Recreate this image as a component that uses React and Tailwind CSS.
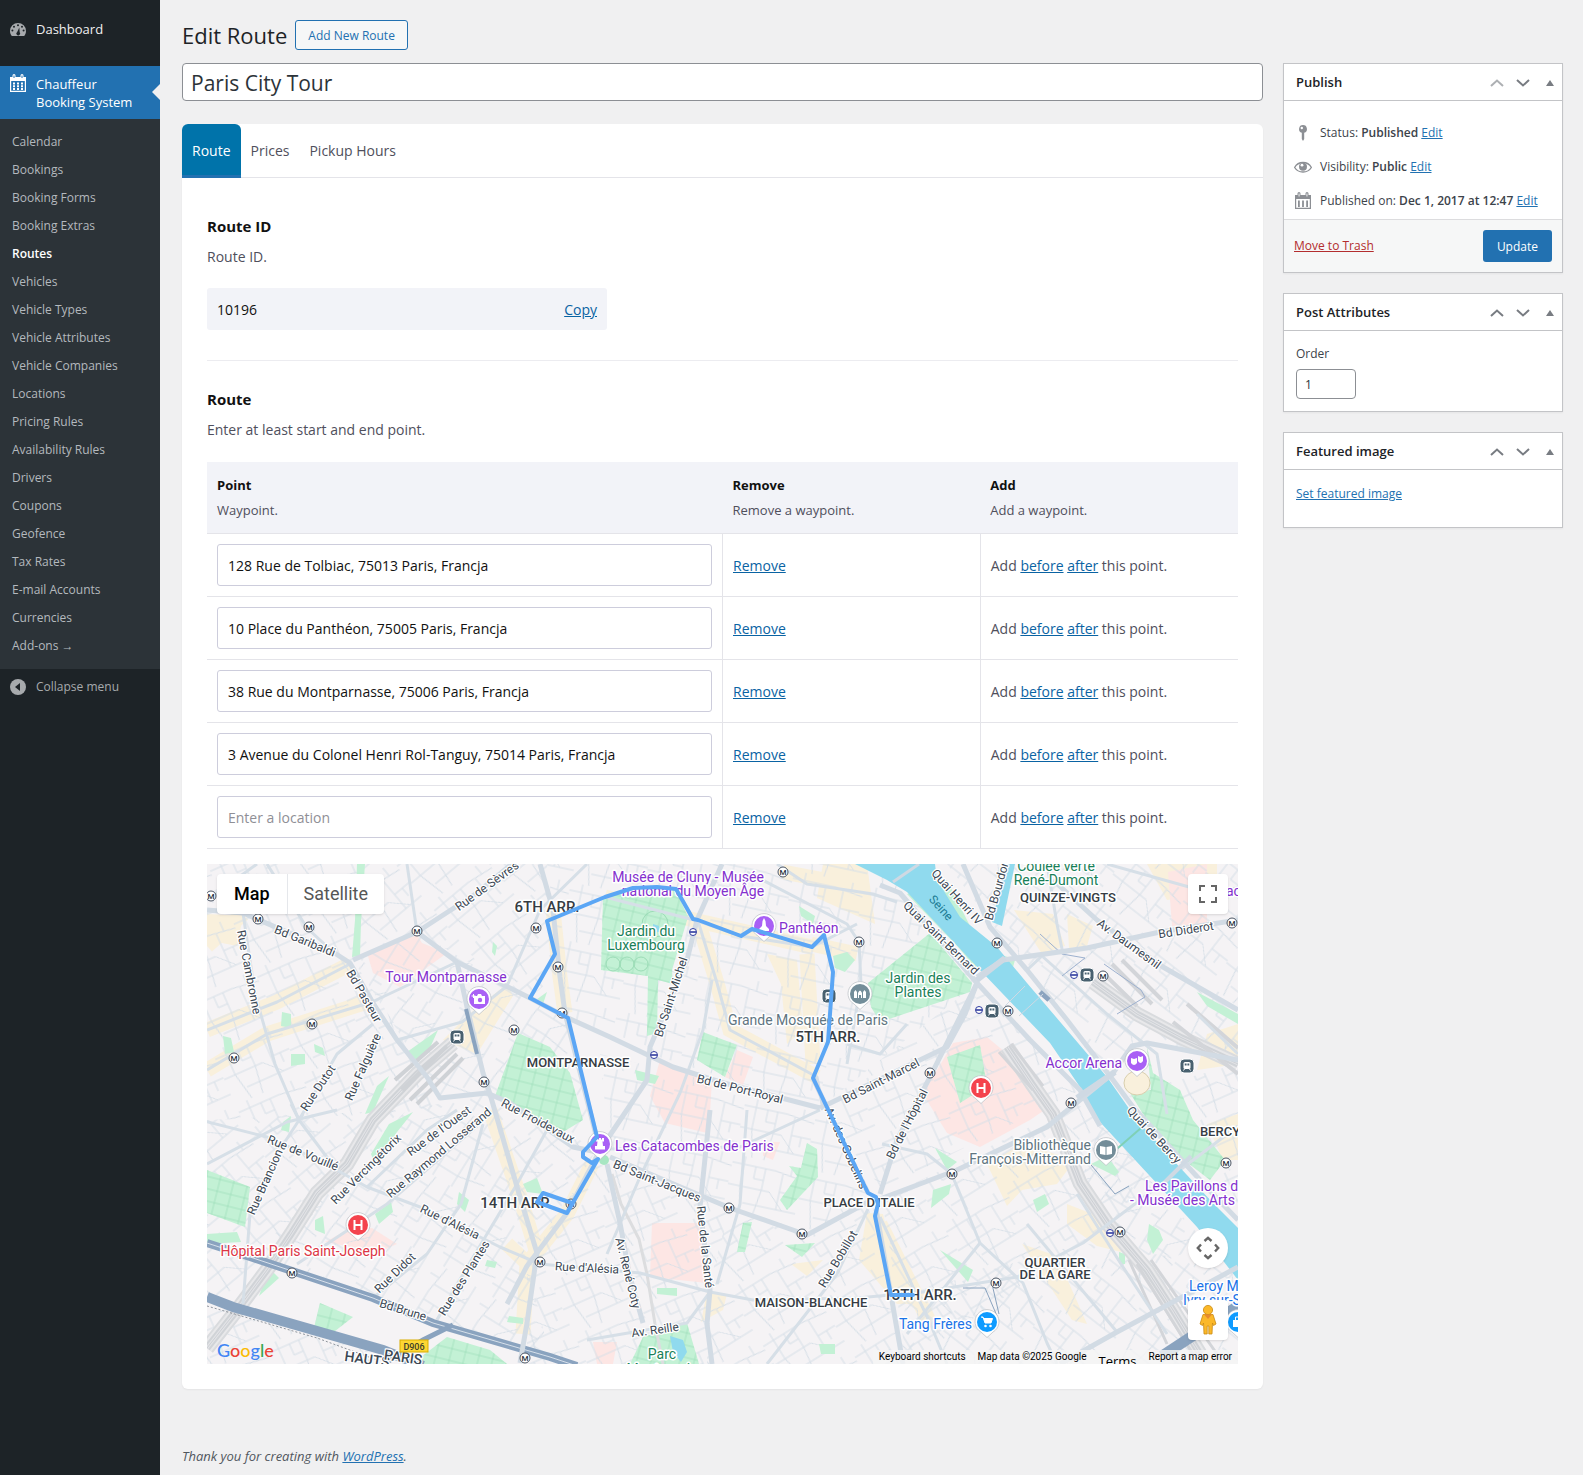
import { useState } from 'react';

const menuItems = [
  'Calendar',
  'Bookings',
  'Booking Forms',
  'Booking Extras',
  'Routes',
  'Vehicles',
  'Vehicle Types',
  'Vehicle Attributes',
  'Vehicle Companies',
  'Locations',
  'Pricing Rules',
  'Availability Rules',
  'Drivers',
  'Coupons',
  'Geofence',
  'Tax Rates',
  'E-mail Accounts',
  'Currencies',
  'Add-ons →'
];

const initialPoints = [
  '128 Rue de Tolbiac, 75013 Paris, Francja',
  '10 Place du Panthéon, 75005 Paris, Francja',
  '38 Rue du Montparnasse, 75006 Paris, Francja',
  '3 Avenue du Colonel Henri Rol-Tanguy, 75014 Paris, Francja',
  ''
];

const tabs = ['Route', 'Prices', 'Pickup Hours'];

const link = 'text-[#2271b1] underline';

/* ---------- Map data ---------- */

const districts = [
  { d: 'M0 0H150L146 96L240 240L190 250L0 256Z', fill: 'url(#streets-a)' },
  { d: 'M150 0H340L350 110L323 134L210 68L146 96Z', fill: 'url(#streets-b)' },
  { d: 'M146 96L210 68L323 134L361 154L390 280L280 229L233 234Z', fill: 'url(#streets-c)' },
  { d: 'M340 0H515L443 183L361 154Z', fill: 'url(#streets-d)' },
  { d: 'M515 0H700L770 119L613 244L443 190Z', fill: 'url(#streets-d)' },
  { d: 'M0 256L193 246L60 406L0 440Z', fill: 'url(#streets-b)' },
  { d: 'M200 246L283 230L320 399L343 493L43 393Z', fill: 'url(#streets-c)' },
  { d: 'M283 230L390 285L320 399Z', fill: 'url(#streets-b)' },
  { d: 'M0 440L180 490V500H0Z', fill: 'url(#streets-a)' },
  { d: 'M393 190L613 244L670 338L600 371L403 293Z', fill: 'url(#streets-d)' },
  { d: 'M385 298L523 344L503 428V500H320V400Z', fill: 'url(#streets-a)' },
  { d: 'M523 344L600 371L661 340L700 500H500V428Z', fill: 'url(#streets-e)' },
  { d: 'M613 244L770 119L873 226L675 325Z', fill: 'url(#streets-a)' },
  { d: 'M675 335L870 240L973 306L876 379L700 500Z', fill: 'url(#streets-e)' },
  { d: 'M700 430L876 379L1031 403V500H690Z', fill: 'url(#streets-f)' },
  { d: 'M740 0H1031V200L940 180L900 213Z', fill: 'url(#streets-f)' },
  { d: 'M920 230L1031 200V340Z', fill: 'url(#streets-a)' },
  { d: 'M893 260L1000 380L950 400L870 330Z', fill: 'url(#streets-c)' }
];

const commercialAreas = [
  'M807 46L846 50L858 82L835 90Z',
  'M860 50L886 62L880 82L862 84Z',
  'M780 300L815 280L868 296L850 320L815 326L800 342Z',
  'M660 349L676 350L688 400L720 440L690 440L652 396Z',
  'M860 340L906 358L914 388L890 382L860 360Z',
  'M815 380L850 392L880 460L865 456Z',
  'M0 50L36 52L30 82L0 76Z',
  'M236 176L262 150L300 120L306 132L270 190Z',
  'M560 90L590 96L596 166L580 180L574 120Z',
  'M616 0H660L668 60L610 34Z',
  'M940 0H1010V28L960 36Z',
  'M1000 170L1031 160V200L990 206Z',
  'M1000 260L1031 250V296L1016 296Z',
  'M500 428L520 430L516 446L494 458Z',
  'M584 400L616 396L600 412Z'
];

const parks = [
  'M394 106L396 33L426 24L468 24L481 53L465 106L466 120L451 116L450 169L440 172L441 112Z',
  'M723 69L765 119L763 128L673 158L664 143L661 119Z',
  'M496 168L530 181L518 213L490 196Z',
  'M311 169L343 183L363 209L376 256L356 268L288 232Z',
  'M740 193L773 181L780 222L753 239Z',
  'M0 306L43 323L38 363L0 349Z',
  'M113 439L146 453L123 471L106 468Z',
  'M240 473L283 486L300 500H205Z',
  'M436 473L480 459L492 500H423Z',
  'M600 279L610 285L611 313L580 346L573 336L590 312L582 302L594 304Z',
  'M536 359L545 358L538 388L530 388Z',
  'M578 381L608 379L595 393Z',
  'M940 183L946 209L973 226L986 256L1018 296L1003 316L973 293L936 250L923 229L944 226Z',
  'M733 386L766 406L761 418Z',
  'M150 0H158L154 58L153 92L145 93L148 56Z',
  'M75 148L84 150L84 164L74 162Z',
  'M107 180L116 184L118 192L108 188Z',
  'M16 172L24 174L27 188L18 190Z',
  'M84 190L98 190L98 200L84 202Z',
  'M200 188L231 166L222 186L206 198Z',
  'M170 222L182 212L166 248L158 250Z',
  'M182 260L206 248L190 268L168 300L164 290Z',
  'M62 404L72 414L52 432Z',
  'M108 356L116 352L118 370L108 366Z',
  'M168 350L184 338L186 348L172 360Z',
  'M286 78L290 82L288 92L285 88Z',
  'M326 138L340 128L336 140Z',
  'M626 92L640 88L648 96L638 108L628 104Z',
  'M592 42L608 52L606 60L594 52Z',
  'M428 206L452 212L448 220L430 216Z',
  'M740 16L764 64L770 106L752 84L700 30Z',
  'M990 128L1031 150L1031 160L1000 142Z',
  'M798 92L808 96L806 103L800 100Z',
  'M942 360L952 366L956 376L946 390L940 376Z',
  'M826 336L838 330L842 340L830 348Z',
  'M912 388L918 390L918 400L912 400Z',
  'M726 326L744 320L742 330L724 344Z',
  'M728 284L750 298L740 306Z',
  'M76 258L84 252L82 268L74 266Z',
  'M316 320L330 314L336 330L320 328Z',
  'M252 328L262 336L258 348L250 340Z',
  'M280 396L290 398L288 404L278 402Z',
  'M450 424L470 424L470 432L450 430Z',
  'M612 480H628V490H614Z',
  'M884 300L900 292L912 308L908 312Z',
  'M302 452L316 454L316 460L300 458Z',
  'M0 370L30 368L34 378L0 380Z'
];

const hospitals = [
  'M160 89L210 71L215 79L240 89L193 123L166 109Z',
  'M530 186L546 193L536 221L518 213Z',
  'M453 196L505 216L503 249L500 269L458 259L443 232Z',
  'M746 179L780 173L823 209L842 243L823 256L773 283L740 269L716 230Z',
  'M445 359L493 359L500 419L443 413Z',
  'M118 378L140 366L165 364L190 380L172 388Z',
  'M961 8L1000 0L1000 60L965 62Z',
  'M386 478L410 478L406 500H390Z',
  'M556 278L573 278L566 296L556 292Z'
];

const water = [
  'M648 0H728L730 16L753 53L790 83L820 119L900 213L930 256L966 296L1006 339L1031 364V416L990 363L893 258L873 223L843 179L773 106L700 28L680 16Z',
  'M799 0H808L795 62L785 58Z',
  'M463 472L476 476L480 488L474 498L466 488Z',
  'M446 60L452 62L452 68L446 68Z'
];

const shoppingStreets = [
  'M0 166L70 138L143 100',
  'M0 82L36 50',
  'M0 206L60 170L160 138',
  'M346 46L353 113L358 149',
  'M491 57L510 119L523 166L610 213',
  'M398 33L491 57L605 83',
  'M600 90L606 200',
  'M283 246L313 333L330 389',
  'M385 300L360 350L320 400',
  'M604 80L650 90',
  'M300 380L320 399L316 470',
  'M673 360L723 459',
  'M576 8L660 24'
];

const majorRoads = [
  'M0 46L36 49L126 88L143 99L166 139L190 176L220 213L233 234L280 229L303 239L366 283L390 288',
  'M146 96L210 68L270 29L306 -1',
  'M210 68L250 98L293 119L323 134L361 154L403 173L466 203L513 218L613 244',
  'M333 0L346 46L353 113L358 149L390 275',
  'M515 0L490 56L480 96L443 183L440 216L393 286',
  'M250 98L260 143L276 209L283 230L313 333L330 389L320 459L313 499',
  'M613 244L740 183L758 150L770 119',
  'M770 119L723 213L690 276L673 330',
  'M665 338L750 306L840 263L906 209L925 182L940 179L1031 196',
  'M661 338L600 371L523 344L403 293',
  'M400 300L413 359L423 413L436 459',
  'M503 246L493 343L503 426L500 460L505 500',
  'M391 290L360 349L320 402L300 440',
  'M756 0L783 63L820 106L860 156L906 216L926 243L1006 330L1031 356',
  'M673 21L693 29L770 119L823 176L873 226L893 262',
  'M770 113L796 96L880 84L953 68L1031 56',
  'M846 16L890 56L956 103L1031 146',
  'M853 500L910 468L1031 403',
  'M606 214L621 246L661 329',
  'M669 345L696 500'
];

const secondaryRoads = [
  'M0 166L70 138L143 100',
  'M36 49L48 130L68 200L92 256',
  'M0 206L60 170L165 138L250 98',
  'M92 256L130 190L166 160',
  'M190 176L255 158L300 122L333 46L380 0',
  'M491 57L510 119L523 166L610 213L616 246',
  'M505 116L496 166L473 229L433 313L400 390',
  'M398 33L491 57L534 72L605 83L650 60',
  'M570 0L600 20L666 30L690 38',
  'M540 8L640 60L652 78L654 120L640 200',
  'M613 246L533 283L403 285',
  'M-7 256L60 273L112 296L160 323L213 343L293 383L333 400L433 409L503 428L546 436L650 434L716 428L810 413L876 379L973 306L1031 262',
  'M0 300L80 258L130 246',
  'M84 240L92 256L125 300',
  'M36 440L43 350L70 290L96 250',
  'M166 434L220 390L254 340L276 260',
  'M230 456L262 400L310 320L340 266',
  'M90 400L180 340L270 262',
  'M160 323L220 266L250 246',
  'M503 428L480 459L380 476',
  'M661 345L630 410L560 500',
  'M540 246L533 340L510 420',
  'M673 353L723 459L740 500',
  'M743 306L773 379L816 419L840 479L850 500',
  'M773 379L700 470',
  'M745 310L720 290L675 280',
  'M820 106L835 92L900 150L950 190L960 250',
  'M840 0L850 60L856 90',
  'M900 0L1000 28L1031 24',
  'M870 330L914 400L960 470',
  'M820 360L910 468',
  'M990 150L1031 190',
  'M700 160L673 190L640 180',
  'M0 36L50 0',
  'M60 0L100 64L126 88',
  'M200 0L210 68'
];

const railways = [
  'M246 179L210 210L166 256L140 300L110 329L84 370L60 406L30 446L0 484',
  'M800 183L825 220L846 250L873 319L900 359L940 406L966 446L993 490',
  'M886 118L930 150L975 174L1031 200'
];

const streetLabels = [
  ['Rue de Sèvres', 280, 22, -36],
  ['Bd Garibaldi', 98, 77, 22],
  ['Rue Cambronne', 42, 108, 79],
  ['Bd Pasteur', 157, 132, 60],
  ['Rue Falguière', 156, 203, -66],
  ['Rue Dutot', 111, 224, -56],
  ["Rue de l'Ouest", 232, 267, -36],
  ['Rue Raymond Losserand', 232, 289, -40],
  ['Rue Vercingétorix', 159, 305, -45],
  ['Rue de Vouillé', 96, 289, 22],
  ['Rue Brancion', 58, 318, -66],
  ["Rue d'Alésia", 243, 358, 26],
  ["Rue d'Alésia", 380, 404, 3],
  ['Rue Didot', 188, 409, -44],
  ['Rue des Plantes', 257, 414, -58],
  ['Bd Brune', 196, 446, 17],
  ['Rue Froidevaux', 331, 257, 28],
  ['Bd Saint-Michel', 464, 133, -72],
  ['Bd de Port-Royal', 533, 225, 14],
  ['Bd Saint-Jacques', 450, 317, 22],
  ['Rue de la Santé', 498, 383, 84],
  ['Av. René Coty', 421, 409, 76],
  ['Av. Reille', 448, 466, -8],
  ['Rue Bobillot', 631, 395, -59],
  ['Av. des Gobelins', 639, 284, 66],
  ["Bd de l'Hôpital", 700, 260, -63],
  ['Bd Saint-Marcel', 674, 217, -27],
  ['Quai Saint-Bernard', 734, 74, 44],
  ['Quai Henri IV', 750, 33, 48],
  ['Bd Bourdon', 790, 26, -74],
  ['Av. Daumesnil', 922, 80, 36],
  ['Bd Diderot', 979, 66, -9],
  ['Quai de Bercy', 947, 271, 47]
];

const areaLabels = [
  ['6TH ARR.', 340, 44, 15],
  ['5TH ARR.', 621, 174, 15],
  ['14TH ARR.', 310, 340, 15],
  ['13TH ARR.', 713, 432, 15],
  ['MONTPARNASSE', 371, 199, 13],
  ["PLACE D'ITALIE", 662, 339, 13],
  ['MAISON-BLANCHE', 604, 439, 13],
  ['QUARTIER', 848, 399, 13],
  ['DE LA GARE', 848, 411, 13],
  ['QUINZE-VINGTS', 861, 34, 13],
  ['BERCY', 1013, 268, 13]
];

const placeLabels = [
  ['Musée de Cluny - Musée', 481, 13, '#8430ce', 'middle'],
  ['national du Moyen Âge', 486, 27, '#8430ce', 'middle'],
  ['Panthéon', 572, 64, '#8430ce', 'start'],
  ['Tour Montparnasse', 239, 113, '#8430ce', 'middle'],
  ['Les Catacombes de Paris', 408, 282, '#8430ce', 'start'],
  ['Accor Arena', 915, 199, '#8430ce', 'end'],
  ['Les Pavillons de Bercy', 938, 322, '#8430ce', 'start'],
  ['- Musée des Arts Forains', 923, 336, '#8430ce', 'start'],
  ['Jardin du', 439, 67, '#188058', 'middle'],
  ['Luxembourg', 439, 81, '#188058', 'middle'],
  ['Jardin des', 711, 114, '#188058', 'middle'],
  ['Plantes', 711, 128, '#188058', 'middle'],
  ['Coulée verte', 849, 2, '#188058', 'middle'],
  ['René-Dumont', 849, 16, '#188058', 'middle'],
  ['Parc', 455, 490, '#188058', 'middle'],
  ['Montsouris', 455, 505, '#188058', 'middle'],
  ['Grande Mosquée de Paris', 601, 156, '#5f7581', 'middle'],
  ['Bibliothèque', 884, 281, '#5f7581', 'end'],
  ['François-Mitterrand', 884, 295, '#5f7581', 'end'],
  ['Hôpital Paris Saint-Joseph', 96, 387, '#dc3545', 'middle'],
  ['Tang Frères', 765, 460, '#1a73e8', 'end'],
  ['Leroy Merlin', 982, 422, '#1a73e8', 'start'],
  ['Ivry-sur-Seine', 976, 436, '#1a73e8', 'start'],
  ['ac', 1019, 27, '#8430ce', 'start']
];

const metroStops = [
  [4, 32], [51, 55], [102, 63], [210, 67], [329, 64], [105, 160], [27, 194], [307, 166], [277, 218],
  [576, 8], [652, 78], [351, 103], [355, 149], [790, 79], [1025, 59], [896, 112], [801, 147],
  [723, 209], [864, 239], [85, 409], [333, 398], [318, 494], [522, 344], [595, 370], [364, 340],
  [745, 310], [789, 419], [913, 368], [1019, 299]
];

const rerStops = [[486, 68], [447, 191], [867, 111], [772, 146], [903, 369]];

const trainStations = [[250, 173], [880, 111], [785, 147], [980, 202], [622, 132]];

const routePath =
  'M365 339L336 329L330 338L360 349L391 295L385 299L376 293V288L390 273L361 154L323 134L348 90L340 57L398 33L426 24L450 23L469 25L486 55L491 56L534 72L545 65L605 83L617 71L626 108L621 178L606 214L661 329L669 333L671 340L668 352L684 431H706';

/* ---------- Icons ---------- */

function DashboardIcon() {
  return (
    <svg className="h-4 w-4 shrink-0" viewBox="0 0 16 16" fill="#a7aaad">
      <path
        fillRule="evenodd"
        d="M8 1a8 8 0 0 0-8 8c0 1.8.6 3.2 1.4 4.4.3.4.6.6 1.1.6h11c.5 0 .8-.2 1.1-.6C15.400 12.200 16 10.800 16 9a8 8 0 0 0-8-8zM8 2.200a1 1 0 1 1 0 2 1 1 0 0 1 0-2zM4 3.700a1 1 0 1 1 0 2 1 1 0 0 1 0-2zM12 3.700a1 1 0 1 1 0 2 1 1 0 0 1 0-2zM2.400 7.600a1 1 0 1 1 0 2 1 1 0 0 1 0-2zM13.600 7.600a1 1 0 1 1 0 2 1 1 0 0 1 0-2zM9.300 5.500l.4 4.800a1.900 1.900 0 1 1-2.500-.4z"
      />
    </svg>
  );
}

function CalendarGridIcon() {
  return (
    <svg className="h-[18px] w-4 shrink-0" viewBox="0 0 16 18" fill="#fff">
      <path
        fillRule="evenodd"
        d="M0 3h2.500V1.500a1.500 1.500 0 0 1 3 0V3h5V1.500a1.500 1.500 0 0 1 3 0V3H16v15H0zM1.200 7v9.800h13.600V7zM3.500 1.500V4h1V1.500zM11.500 1.500V4h1V1.500z"
      />
      <path d="M3 8.500h2v2H3zM7 8.500h2v2H7zM11 8.500h2v2h-2zM3 11.200h2v2H3zM7 11.200h2v2H7zM11 11.200h2v2h-2zM3 13.900h2v2H3zM7 13.900h2v2H7zM11 13.900h2v2h-2z" />
    </svg>
  );
}

function CollapseIcon() {
  return (
    <svg className="h-4 w-4 shrink-0" viewBox="0 0 16 16">
      <circle cx="8" cy="8" r="8" fill="#a7aaad" />
      <path d="M10 4v8L5 8z" fill="#1d2327" />
    </svg>
  );
}

function PinIcon() {
  return (
    <svg className="h-[18px] w-[18px] shrink-0" viewBox="0 0 18 18" fill="#8c8f94">
      <path d="M9 1a4 4 0 0 0-1.200 7.800V15L9 17l1.200-2V8.800A4 4 0 0 0 9 1z" />
      <circle cx="7.800" cy="4" r="1.200" fill="#fff" />
    </svg>
  );
}

function EyeIcon() {
  return (
    <svg className="h-[18px] w-[18px] shrink-0" viewBox="0 0 18 18">
      <path d="M.6 9.500C2.500 6 5.500 4.500 9 4.500s6.500 1.500 8.400 5C15.500 12.500 12.500 14 9 14S2.500 12.500.6 9.500z" fill="none" stroke="#8c8f94" strokeWidth="1.300" />
      <circle cx="9" cy="8.800" r="4" fill="#8c8f94" />
      <circle cx="8" cy="7.200" r="1.400" fill="#fff" />
    </svg>
  );
}

function CalendarBarsIcon() {
  return (
    <svg className="h-[18px] w-[18px] shrink-0" viewBox="0 0 18 18" fill="#8c8f94">
      <path
        fillRule="evenodd"
        d="M1 3h2.500V1.500a1.500 1.500 0 0 1 3 0V3h5V1.500a1.500 1.500 0 0 1 3 0V3H17v14H1zM2.200 7v8.800h13.600V7zM4.600 1.500V4.500h.9v-3zM12.500 1.500V4.500h.9v-3z"
      />
      <path d="M4 8.500h1.800V15H4zM8.100 8.500h1.800V15H8.100zM12.200 8.500H14V15h-1.800z" />
    </svg>
  );
}

/* ---------- Map ---------- */

function MapPin({ x, y, color, children }) {
  return (
    <g transform={`translate(${x} ${y})`}>
      <path d="M0 15.500L-6 10A12 12 0 1 1 6 10Z" fill="#fff" stroke="#b9bdc3" strokeWidth="0.7" />
      <circle r="10" fill={color} />
      {children}
    </g>
  );
}

function StreetPattern({ id, angle }) {
  return (
    <pattern id={id} width="72" height="58" patternUnits="userSpaceOnUse" patternTransform={`rotate(${angle})`}>
      <path
        d="M0 8H44L72 12M0 30H42M18 46H72M12 0V30L18 58M34 8V30L30 58M52 10V46M42 30L58 46M52 28H72M60 0V10M24 8V20H34M62 28V38"
        fill="none"
        stroke="#d6dfe7"
        strokeWidth="1"
      />
    </pattern>
  );
}

function MapCanvas() {
  return (
    <svg
      className="block h-[500px] w-full font-[Roboto,sans-serif]"
      viewBox="0 0 1031 500"
      preserveAspectRatio="xMidYMid slice"
      role="img"
      aria-label="Map"
    >
      <defs>
        <StreetPattern id="streets-a" angle={-24} />
        <StreetPattern id="streets-b" angle={-40} />
        <StreetPattern id="streets-c" angle={-58} />
        <StreetPattern id="streets-d" angle={12} />
        <StreetPattern id="streets-e" angle={-32} />
        <StreetPattern id="streets-f" angle={38} />
        <pattern id="park-paths" width="14" height="12" patternUnits="userSpaceOnUse" patternTransform="rotate(14)">
          <path d="M0 3H14M5 0V12" stroke="#9bdcb6" strokeWidth="0.7" fill="none" />
        </pattern>
      </defs>
      <rect width="1031" height="500" fill="#f5f3f5" />

      <g fill="#f9f0dc">
        {commercialAreas.map((d) => <path key={d} d={d} />)}
      </g>
      <g fill="none" stroke="#f9f0dc" strokeWidth="15">
        {shoppingStreets.map((d) => <path key={d} d={d} />)}
      </g>
      <g fill="#fde6e4">
        {hospitals.map((d) => <path key={d} d={d} />)}
      </g>
      {districts.map((item) => <path key={item.d} d={item.d} fill={item.fill} />)}
      <g fill="#c3f1d5">
        {parks.map((d) => <path key={d} d={d} />)}
      </g>
      <g fill="url(#park-paths)">
        {parks.slice(0, 13).map((d) => <path key={d} d={d} />)}
      </g>
      <ellipse cx="930" cy="219" rx="13" ry="12" fill="#f9f0dc" stroke="#d9cfae" />
      <g fill="none" stroke="#9bdcb6">
        <circle cx="406" cy="100" r="7" />
        <circle cx="420" cy="100" r="7" />
        <circle cx="434" cy="100" r="7" />
        <circle cx="448" cy="60" r="13" />
      </g>

      {/* Railways */}
      <g fill="none">
        {railways.map((d) => (
          <g key={d}>
            <path d={d} stroke="#d9dbde" strokeWidth="15" />
            <path d={d} stroke="#e8e8ea" strokeWidth="11" />
            <path d={d} stroke="#d0d3d7" strokeWidth="7" />
            <path d={d} stroke="#e2e3e6" strokeWidth="3" />
            <path d={d} stroke="#cccfd4" strokeWidth="1" />
          </g>
        ))}
        <path d="M231 178L188 216M240 182L195 226M250 190L203 236M256 194L210 240" stroke="#cfd2d6" strokeWidth="4" />
        <path d="M895 108L930 142M905 100L945 140M915 96L955 136M980 140L1031 184M966 158L1031 210" stroke="#d3d5d9" strokeWidth="4" />
        <path d="M792 188L826 226M804 180L836 222M930 400L986 490M944 396L1010 490M922 396L960 480" stroke="#d3d5d9" strokeWidth="3" />
        <path d="M405 310L414 340L432 375L440 410L448 460L456 500" stroke="#dcdddf" strokeWidth="3" />
      </g>

      {/* Streets */}
      <g fill="none" stroke="#d6dfe7" strokeLinejoin="round">
        {secondaryRoads.map((d) => <path key={d} d={d} strokeWidth="3" />)}
      </g>
      <g fill="#90daee">
        {water.map((d) => <path key={d} d={d} />)}
      </g>
      <path d="M0 379L43 393L166 434L226 459L343 493L370 502" fill="none" stroke="#8aa3bf" strokeWidth="8" />
      <path d="M0 379L43 393L166 434L226 459L343 493L370 502" fill="none" stroke="#d7e0ea" strokeWidth="1" />
      <path d="M0 433L26 443L176 486L216 502" fill="none" stroke="#8aa3bf" strokeWidth="10" />
      <path d="M180 498L216 476L246 461" fill="none" stroke="#8aa3bf" strokeWidth="5" />
      <path d="M0 442L110 474L170 496" fill="none" stroke="#8e949c" strokeWidth="1" strokeDasharray="2 2" />
      <path d="M955 492L1031 442" fill="none" stroke="#8aa3bf" strokeWidth="11" />
      <path d="M833 70L855 90L878 94L855 112M897 100L934 126L938 133L910 150" fill="none" stroke="#9db1cf" strokeWidth="1" />
      <path d="M880 296L908 330L922 322M756 424L778 424L790 452M785 420L792 450" fill="none" stroke="#8aa3bf" strokeWidth="1" />
      <g fill="none" stroke="#d2dbe4" strokeLinejoin="round">
        {majorRoads.map((d) => <path key={d} d={d} strokeWidth="5" />)}
      </g>
      <path d="M259 145L270 190" fill="none" stroke="#8aa3bf" strokeWidth="4" />
      <path d="M833 128L842 136" fill="none" stroke="#8aa3bf" strokeWidth="5" />
      <g fill="none" stroke="#cfd9e3">
        <path d="M686 18L712 0" strokeWidth="3" />
        <path d="M770 116L798 94" strokeWidth="6" />
        <path d="M798 142L818 122M812 152L836 130" strokeWidth="1" />
        <path d="M870 234L908 208" strokeWidth="6" />
        <path d="M904 290L934 264" stroke="#7fd0b6" strokeWidth="2" />
        <path d="M956 320L984 292" strokeWidth="4" />
      </g>
      <circle cx="397" cy="296" r="5" fill="#a8e6c2" />

      {/* Stations */}
      {metroStops.map(([x, y]) => (
        <g key={`${x}-${y}`} transform={`translate(${x} ${y})`}>
          <circle r="5" fill="#fff" stroke="#4b5563" />
          <text y="3" textAnchor="middle" fontSize="8" fontWeight="500" fill="#2b3440">M</text>
        </g>
      ))}
      {rerStops.map(([x, y]) => (
        <g key={`${x}-${y}`} transform={`translate(${x} ${y})`} fill="none" stroke="#2f3a9e">
          <circle r="3.500" fill="#fff" />
          <path d="M-3 0H3" strokeWidth="1.600" />
        </g>
      ))}
      {trainStations.map(([x, y]) => (
        <g key={`${x}-${y}`} transform={`translate(${x} ${y})`}>
          <rect x="-7" y="-7" width="14" height="14" rx="4" fill="#48606f" stroke="#fff" />
          <rect x="-3.500" y="-4" width="7" height="7" rx="1.500" fill="#fff" />
          <path d="M-2.300 -2.500H-.4V-.4H-2.300ZM.4 -2.500H2.300V-.4H.4Z" fill="#48606f" />
          <path d="M-2.500 3L-3.500 4.500M2.500 3L3.500 4.500" stroke="#fff" />
        </g>
      ))}

      {/* Labels */}
      <g textAnchor="middle" fontSize="12" fill="#3b4754" stroke="#fff" strokeWidth="2.500" strokeLinejoin="round" paintOrder="stroke">
        {streetLabels.map(([text, x, y, angle]) => (
          <text key={text + x} transform={`translate(${x} ${y}) rotate(${angle})`} y="4">{text}</text>
        ))}
        <text transform="translate(734 44) rotate(48)" y="4" fill="#1c7c94" stroke="none">Seine</text>
        <text transform="translate(160 496) rotate(8)" fontSize="14" fontWeight="500" y="4">HAUTS</text>
        <text transform="translate(196 494) rotate(8)" fontSize="14" fontWeight="500" y="4">PARIS</text>
      </g>
      <g textAnchor="middle" fontWeight="500" fill="#363c43" stroke="#fff" strokeWidth="3" strokeLinejoin="round" paintOrder="stroke">
        {areaLabels.map(([text, x, y, size]) => (
          <text key={text} x={x} y={y + 4} fontSize={size}>{text}</text>
        ))}
      </g>
      <g fontSize="14" stroke="#fff" strokeWidth="3" strokeLinejoin="round" paintOrder="stroke">
        {placeLabels.map(([text, x, y, color, anchor]) => (
          <text key={text} x={x} y={y + 5} fill={color} textAnchor={anchor}>{text}</text>
        ))}
      </g>
      <rect x="193" y="476" width="28" height="12" fill="#fdd633" stroke="#d9ae00" />
      <text x="207" y="486" textAnchor="middle" fontSize="9" fontWeight="500" fill="#3c3f2a">D906</text>

      {/* Places */}
      <MapPin x={272} y={135} color="#a960f5">
        <path d="M-5 -3H-2L-1 -5H2L3 -3H6V5H-5Z" fill="#fff" />
        <circle cx="1" cy="1" r="2.200" fill="#a960f5" />
        <path d="M-5.500 -5V-1M-7.500 -3H-3.500" stroke="#fff" />
      </MapPin>
      <MapPin x={557} y={62} color="#a960f5">
        <path d="M0 -8L1.500 -5L2 0L5 3V5H-5V3L-2 0L-1.500 -5Z" fill="#fff" />
      </MapPin>
      <MapPin x={393} y={280} color="#a960f5">
        <path d="M-4 -6H-2V-4.500H-1V-6H1V-4.500H2V-6H4V-2.500H2.500L3 2H5V5.500H-5V2H-3L-2.500 -2.500H-4Z" fill="#fff" />
      </MapPin>
      <MapPin x={930} y={197} color="#a960f5">
        <path d="M-6 -3L-3 -2L0 -3V2Q-3 6 -6 2Z" fill="#fff" />
        <path d="M1 -5L3.500 -4L6 -5V0Q3.500 4 1 0Z" fill="#fff" />
      </MapPin>
      <MapPin x={653} y={130} color="#738d99">
        <path d="M-6 4V-2L-4.500 -4L-3 -2V4ZM-2 4V-1Q0 -6 2 -1V4H1V1H-1V4ZM3 4V-2L4.500 -4L6 -2V4Z" fill="#fff" />
      </MapPin>
      <MapPin x={899} y={286} color="#738d99">
        <path d="M-6 -4L-.5 -3V5L-6 4ZM6 -4L.5 -3V5L6 4Z" fill="#fff" />
      </MapPin>
      <MapPin x={774} y={224} color="#f4434d">
        <path d="M-3.500 -5V5M3.500 -5V5M-3.500 0H3.500" stroke="#fff" strokeWidth="2" />
      </MapPin>
      <MapPin x={151} y={361} color="#f4434d">
        <path d="M-3.500 -5V5M3.500 -5V5M-3.500 0H3.500" stroke="#fff" strokeWidth="2" />
      </MapPin>
      <MapPin x={780} y={458} color="#0f9bff">
        <path d="M-6 -5H-4L-2 1H4L5.500 -3.500H-3.500" fill="#fff" stroke="#fff" />
        <circle cx="-1.500" cy="4" r="1.300" fill="#fff" />
        <circle cx="3.500" cy="4" r="1.300" fill="#fff" />
      </MapPin>
      <MapPin x={1031} y={458} color="#0f9bff">
        <path d="M-5 -2H5V5H-5Z" fill="#fff" />
        <path d="M-2.500 -2V-5H2.500V-2" fill="none" stroke="#fff" />
      </MapPin>

      <path d={routePath} fill="none" stroke="#5ba6f5" strokeWidth="4" strokeLinejoin="round" strokeLinecap="round" />
    </svg>
  );
}

function RouteMap() {
  return (
    <div className="relative mt-[15px] overflow-hidden font-[Roboto,sans-serif]">
      <MapCanvas />

      <div className="absolute top-2.5 left-2.5 flex rounded-sm bg-white text-lg shadow">
        <button type="button" className="h-10 border-r border-gray-200 px-[17px] font-medium text-black">Map</button>
        <button type="button" className="h-10 px-4 text-[#565656]">Satellite</button>
      </div>

      <button
        type="button"
        aria-label="Toggle fullscreen view"
        className="absolute top-2.5 right-2.5 flex h-10 w-10 items-center justify-center rounded-sm bg-white shadow"
      >
        <svg className="h-[18px] w-[18px]" viewBox="0 0 18 18" fill="#666">
          <path d="M0 0v6h2V2h4V0zM16 0h-4v2h4v4h2V0zM16 16h-4v2h6v-6h-2zM2 12H0v6h6v-2H2z" />
        </svg>
      </button>

      <button
        type="button"
        aria-label="Map camera controls"
        className="absolute right-2.5 bottom-24 flex h-10 w-10 items-center justify-center rounded-full bg-white shadow"
      >
        <svg className="h-6 w-6" viewBox="0 0 24 24" fill="none" stroke="#666" strokeWidth="2.400">
          <path d="M8.500 5L12 1.800L15.500 5M8.500 19L12 22.200L15.500 19M5 8.500L1.800 12L5 15.500M19 8.500L22.200 12L19 15.500" />
        </svg>
      </button>

      <button
        type="button"
        aria-label="Street View"
        className="absolute right-2.5 bottom-6 flex h-10 w-10 items-center justify-center rounded-sm bg-white shadow"
      >
        <svg className="h-8 w-5" viewBox="0 0 20 32" fill="#fbb829" stroke="#c98a13" strokeWidth="0.8">
          <path d="M5 10.500H15L18 20L15.500 21.500L14.500 19L14 30H10.800V22H9.200V30H6L5.500 19L4.500 21.500L2 20Z" />
          <circle cx="10" cy="6" r="4.600" />
          <path d="M6 10.500H14L10 15Z" fill="#e88a2e" stroke="none" />
        </svg>
      </button>

      <div className="absolute bottom-1 left-2.5 font-[Lato,sans-serif] text-lg leading-5 font-medium">
        <span className="text-[#4285f4]">G</span>
        <span className="text-[#ea4335]">o</span>
        <span className="text-[#fbbc05]">o</span>
        <span className="text-[#4285f4]">g</span>
        <span className="text-[#34a853]">l</span>
        <span className="text-[#ea4335]">e</span>
      </div>

      <div className="absolute right-0 bottom-0 flex h-3.5 gap-3 overflow-hidden bg-[#f5f5f5]/80 px-1.5 text-[10px] leading-[14px] text-black">
        <button type="button">Keyboard shortcuts</button>
        <span>Map data ©2025 Google</span>
        <a href="#terms" className="pt-1 font-['Open_Sans',sans-serif] text-[13px]">Terms</a>
        <a href="#report">Report a map error</a>
      </div>
    </div>
  );
}

/* ---------- Layout ---------- */

function AdminMenu() {
  return (
    <nav className="w-40 shrink-0 bg-[#1d2327] text-[13px] text-[#f0f0f1]">
      <a href="#dashboard" className="mt-3.5 flex h-8 items-center gap-2.5 px-2.5">
        <DashboardIcon />
        Dashboard
      </a>
      <a href="#chauffeur" className="relative mt-5 flex gap-2.5 bg-[#2271b1] py-2 pr-5 pl-2.5 leading-[18px] text-white">
        <CalendarGridIcon />
        <span className="pt-px">Chauffeur Booking System</span>
        <span className="absolute top-[18px] right-0 border-8 border-transparent border-r-[#f0f0f1]" />
      </a>
      <ul className="bg-[#2c3338] py-[9px] text-xs leading-7">
        {menuItems.map((item) => (
          <li key={item}>
            <a
              href="#menu"
              className={item === 'Routes' ? 'block px-3 font-semibold text-white' : 'block px-3 text-[#b4b9be]'}
            >
              {item}
            </a>
          </li>
        ))}
      </ul>
      <button type="button" className="flex h-9 items-center gap-2.5 px-2.5 text-xs text-[#a7aaad]">
        <CollapseIcon />
        Collapse menu
      </button>
    </nav>
  );
}

function MetaBox({ title, firstBox, children }) {
  return (
    <section className="border border-[#c3c4c7] bg-white shadow-xs">
      <div className="flex h-[37px] items-center justify-between border-b border-[#c3c4c7] pt-0.5 pr-1 pl-3">
        <h2 className="text-[13px] font-semibold text-[#1d2327]">{title}</h2>
        <div className="flex items-center gap-3 text-[#787c82]">
          <button type="button" aria-label={`Move ${title} up`} className={firstBox ? 'opacity-60' : ''}>
            <svg className="h-2 w-3.5" viewBox="0 0 14 8" fill="none" stroke="currentColor" strokeWidth="2">
              <path d="M1 7L7 1.500L13 7" />
            </svg>
          </button>
          <button type="button" aria-label={`Move ${title} down`}>
            <svg className="h-2 w-3.5" viewBox="0 0 14 8" fill="none" stroke="currentColor" strokeWidth="2">
              <path d="M1 1L7 6.500L13 1" />
            </svg>
          </button>
          <button type="button" aria-label={`Toggle ${title}`} className="px-1">
            <svg className="h-1.5 w-2" viewBox="0 0 8 6" fill="currentColor">
              <path d="M4 0L8 6H0z" />
            </svg>
          </button>
        </div>
      </div>
      {children}
    </section>
  );
}

function PublishBox() {
  return (
    <MetaBox title="Publish" firstBox>
      <div className="flex flex-col pt-[15px] pb-px text-xs leading-[34px] text-[#3c434a]">
        <div className="flex items-center gap-2 px-2.5">
          <PinIcon />
          <span>Status: <b className="font-semibold">Published</b> <a href="#status" className={link}>Edit</a></span>
        </div>
        <div className="flex items-center gap-2 px-2.5">
          <EyeIcon />
          <span>Visibility: <b className="font-semibold">Public</b> <a href="#visibility" className={link}>Edit</a></span>
        </div>
        <div className="flex items-center gap-2 px-2.5">
          <CalendarBarsIcon />
          <span>Published on: <b className="font-semibold">Dec 1, 2017 at 12:47</b> <a href="#date" className={link}>Edit</a></span>
        </div>
      </div>
      <div className="flex items-center justify-between border-t border-[#dcdcde] bg-[#f6f7f7] p-2.5">
        <a href="#trash" className="text-xs text-[#b32d2e] underline">Move to Trash</a>
        <button type="button" className="h-8 rounded-[3px] bg-[#2271b1] px-3.5 pt-0.5 text-xs text-white">Update</button>
      </div>
    </MetaBox>
  );
}

function RouteTable({ points, setPoints }) {
  const updatePoint = (index, value) => {
    setPoints(points.map((point, i) => (i === index ? value : point)));
  };

  return (
    <table className="mt-[17px] w-full table-fixed border-collapse text-left text-sm text-[#4f4f5c]">
      <thead>
        <tr className="border-b border-[#e4e4e9] bg-[#f2f3f8] text-[13px] leading-[25px]">
          <th className="w-1/2 px-2.5 pt-[11px] pb-2.5 font-normal">
            <span className="block font-bold text-[#111]">Point</span>
            Waypoint.
          </th>
          <th className="w-1/4 px-2.5 font-normal">
            <span className="block font-bold text-[#111]">Remove</span>
            Remove a waypoint.
          </th>
          <th className="w-1/4 px-2.5 font-normal">
            <span className="block font-bold text-[#111]">Add</span>
            Add a waypoint.
          </th>
        </tr>
      </thead>
      <tbody>
        {points.map((point, index) => (
          <tr key={index} className="border-b border-[#e4e4e9]">
            <td className="p-2.5">
              <input
                type="text"
                aria-label={`Waypoint ${index + 1}`}
                value={point}
                placeholder="Enter a location"
                onChange={(e) => updatePoint(index, e.target.value)}
                className="block h-[42px] w-full rounded-[3px] border border-[#cdcddc] bg-white px-2.5 text-[#111] placeholder:text-[#8f8f96]"
              />
            </td>
            <td className="border-l border-[#e4e4e9] px-2.5 pt-0.5">
              <a href="#remove" className="text-[#0a63a3] underline">Remove</a>
            </td>
            <td className="border-l border-[#e4e4e9] px-2.5 pt-0.5">
              Add <a href="#before" className="text-[#0a63a3] underline">before</a>{' '}
              <a href="#after" className="text-[#0a63a3] underline">after</a> this point.
            </td>
          </tr>
        ))}
      </tbody>
    </table>
  );
}

export default function App() {
  const [title, setTitle] = useState('Paris City Tour');
  const [points, setPoints] = useState(initialPoints);
  const [order, setOrder] = useState('1');
  const [activeTab, setActiveTab] = useState('Route');

  return (
    <div className="flex min-h-screen bg-[#f0f0f1] font-['Open_Sans','Noto_Sans',sans-serif] text-[#3c434a]">
      <AdminMenu />

      <main className="flex min-w-0 flex-1 flex-col pr-5 pl-[22px]">
        <div className="mt-5 flex items-center gap-2">
          <h1 className="text-[22px] leading-[30px] text-[#1d2327]">Edit Route</h1>
          <a
            href="#new"
            className="flex h-[30px] items-center rounded-[3px] border border-[#2271b1] bg-[#f6f7f7] px-3 pt-px text-xs text-[#2271b1]"
          >
            Add New Route
          </a>
        </div>

        <div className="mt-[13px] flex items-start gap-5">
          <div className="min-w-0 flex-1">
            <input
              type="text"
              aria-label="Title"
              value={title}
              onChange={(e) => setTitle(e.target.value)}
              className="block h-[38px] w-full rounded border border-[#8c8f94] bg-white px-2 pt-0.5 text-[21px] text-[#2c3338]"
            />

            <div className="mt-[23px] rounded-md bg-white shadow-xs">
              <div className="flex h-[54px] border-b border-[#e4e4e9] text-sm text-[#4f4f5c]">
                {tabs.map((tab) => (
                  <button
                    key={tab}
                    type="button"
                    onClick={() => setActiveTab(tab)}
                    className={
                      tab === activeTab
                        ? 'h-[54px] rounded-t-md border-b-3 border-[#2271b1] bg-[#0073aa] px-2.5 pt-[3px] text-white'
                        : 'px-2.5'
                    }
                  >
                    {tab}
                  </button>
                ))}
              </div>

              <div className="px-[25px] pt-[33px] pb-[25px]">
                <h3 className="mb-px text-[15px] leading-[30px] font-bold text-[#111]">Route ID</h3>
                <p className="text-sm leading-[30px] text-[#4f4f5c]">Route ID.</p>
                <div className="mt-4 flex h-[42px] max-w-[400px] items-center justify-between rounded-[3px] bg-[#f2f3f8] px-2.5 pt-px text-sm text-[#111]">
                  <span>10196</span>
                  <a href="#copy" className="text-[#0a63a3] underline">Copy</a>
                </div>

                <hr className="mt-[30px] mb-[23px] border-[#ececf0]" />

                <h3 className="mb-px text-[15px] leading-[30px] font-bold text-[#111]">Route</h3>
                <p className="text-sm leading-[30px] text-[#4f4f5c]">Enter at least start and end point.</p>
                <RouteTable points={points} setPoints={setPoints} />
                <RouteMap />
              </div>
            </div>
          </div>

          <aside className="flex w-[280px] shrink-0 flex-col gap-5">
            <PublishBox />
            <MetaBox title="Post Attributes">
              <div className="flex flex-col items-start gap-[7px] px-3 pt-[15px] pb-3 text-xs">
                <label htmlFor="menu-order" className="font-medium">Order</label>
                <input
                  id="menu-order"
                  type="text"
                  value={order}
                  onChange={(e) => setOrder(e.target.value)}
                  className="h-[30px] w-[60px] rounded border border-[#8c8f94] bg-white px-2 text-[#2c3338]"
                />
              </div>
            </MetaBox>
            <MetaBox title="Featured image">
              <div className="px-3 pt-[15px] pb-6 text-xs leading-[18px]">
                <a href="#featured" className={link}>Set featured image</a>
              </div>
            </MetaBox>
          </aside>
        </div>

        <footer className="mt-auto pb-2.5 text-[13px] leading-[18px] text-[#50575e] italic">
          Thank you for creating with <a href="#wordpress" className={link}>WordPress</a>.
        </footer>
      </main>
    </div>
  );
}
